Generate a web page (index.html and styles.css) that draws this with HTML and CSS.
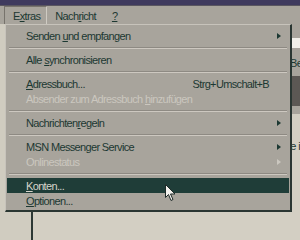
FILE: index.html
```html
<!DOCTYPE html>
<html>
<head>
<meta charset="utf-8">
<link rel="stylesheet" href="styles.css">
</head>
<body>
<div class="titlebar"></div>
<div class="menubar">
  <span class="mb-item pressed">E<u>x</u>tras</span>
  <span class="mb-item">Nach<u>r</u>icht</span>
  <span class="mb-item"><u>?</u></span>
</div>
<div class="workspace">
  <div class="folders"></div>
  <div class="main">
    <div class="toolbar">
      <div class="tb-icon"></div>
      <div class="tb-label">Be</div>
    </div>
    <div class="pane-header"></div>
    <div class="pane-strip"></div>
    <div class="content">Die i</div>
  </div>
</div>

<div class="menu">
  <div class="item"><span class="label">Senden <u>u</u>nd empfangen</span><span class="arrow"></span></div>
  <div class="sep"></div>
  <div class="item"><span class="label">Alle <u>s</u>ynchronisieren</span></div>
  <div class="sep"></div>
  <div class="item"><span class="label"><u>A</u>dressbuch...</span><span class="shortcut">Strg+Umschalt+B</span></div>
  <div class="item disabled"><span class="label">Absender zum Adressbuch <u>h</u>inzufügen</span></div>
  <div class="sep"></div>
  <div class="item"><span class="label">Nachrichten<u>r</u>egeln</span><span class="arrow"></span></div>
  <div class="sep"></div>
  <div class="item"><span class="label">MSN Messenger Service</span><span class="arrow"></span></div>
  <div class="item disabled"><span class="label">Onlinestatus</span><span class="arrow"></span></div>
  <div class="sep"></div>
  <div class="item active"><span class="label"><u>K</u>onten...</span></div>
  <div class="item"><span class="label"><u>O</u>ptionen...</span></div>
</div>

<svg class="cursor" width="12" height="18" viewBox="0 0 12 18">
  <path d="M0.5 0.5 L0.5 13.5 L3.5 10.5 L6 16.5 L8 15.5 L5.5 10 L10 10 Z" fill="#f4f2ee" stroke="#1e2a28" stroke-width="1"/>
</svg>
</body>
</html>
```

FILE: styles.css
```css
* { box-sizing: border-box; }
html, body {
  margin: 0;
  padding: 0;
}
body {
  width: 300px;
  height: 240px;
  overflow: hidden;
  background: #d3cfc3;
  font-family: "Liberation Sans", Arial, sans-serif;
  font-size: 11px;
  letter-spacing: -0.65px;
  color: #1c3832;
  position: relative;
}
u { text-decoration: underline; text-underline-offset: 1px; }

.titlebar {
  height: 6px;
  background: #3f3a5e;
  border-bottom: 1px solid #5a5660;
}
.menubar {
  height: 18px;
  background: #a8a49c;
  display: flex;
  align-items: stretch;
  padding-left: 4px;
}
.mb-item {
  display: flex;
  align-items: center;
  padding: 1px 7px 0 7px;
  margin-right: 2px;
}
.mb-item.pressed {
  padding: 1px 6px 0 8px;
  border-top: 1px solid #77736c;
  border-left: 1px solid #77736c;
  border-right: 1px solid #cfcbc3;
  margin-right: 1px;
}

.workspace {
  display: flex;
  height: 216px;
}
.folders {
  width: 33px;
  background: #d0ccc0;
  border-right: 2px solid #2c3834;
}
.main {
  flex: 1;
  display: flex;
  flex-direction: column;
}
.toolbar {
  height: 52px;
  background: #a8a49c;
  display: flex;
  flex-direction: column;
  align-items: flex-end;
  padding-top: 14px;
  padding-right: 0;
}
.tb-icon {
  width: 10px;
  height: 10px;
  background: #f2f0ea;
}
.tb-label {
  margin-top: 10px;
  width: 10px;
  overflow: hidden;
  line-height: 10px;
}
.pane-header {
  height: 30px;
  background: #5c5854;
}
.pane-strip {
  height: 8px;
  background: #a8a49c;
}
.content {
  flex: 1;
  text-align: right;
  padding-top: 26px;
  white-space: nowrap;
  direction: rtl;
  overflow: hidden;
}

.menu {
  position: absolute;
  left: 5px;
  top: 24px;
  width: 287px;
  height: 188px;
  background: #a8a49c;
  border-top: 1px solid #c7c3bb;
  border-left: 1px solid #c7c3bb;
  border-right: 2px solid #2a3632;
  border-bottom: 2px solid #2a3632;
  padding: 3px 1px 0 1px;
  display: flex;
  flex-direction: column;
}
.item {
  height: 15px;
  display: flex;
  align-items: center;
  padding-left: 19px;
  padding-right: 6px;
  white-space: nowrap;
}
.item .label { flex: 1; }
.item .shortcut { margin-right: 14px; }
.item .arrow {
  width: 0;
  height: 0;
  border-top: 3.5px solid transparent;
  border-bottom: 3.5px solid transparent;
  border-left: 4px solid #1c3832;
  margin-right: 2px;
}
.item.disabled { color: #cbc7bf; }
.item.disabled .arrow { border-left-color: #cbc7bf; }
.item.active {
  background: #1f3d38;
  color: #d8d4cc;
}
.sep {
  height: 9px;
  display: flex;
  flex-direction: column;
  justify-content: center;
  padding: 0 2px;
}
.sep::before {
  content: "";
  display: block;
  border-top: 1px solid #8e8a83;
  border-bottom: 1px solid #cdc8c0;
}

.cursor {
  position: absolute;
  left: 165px;
  top: 184px;
}
```
